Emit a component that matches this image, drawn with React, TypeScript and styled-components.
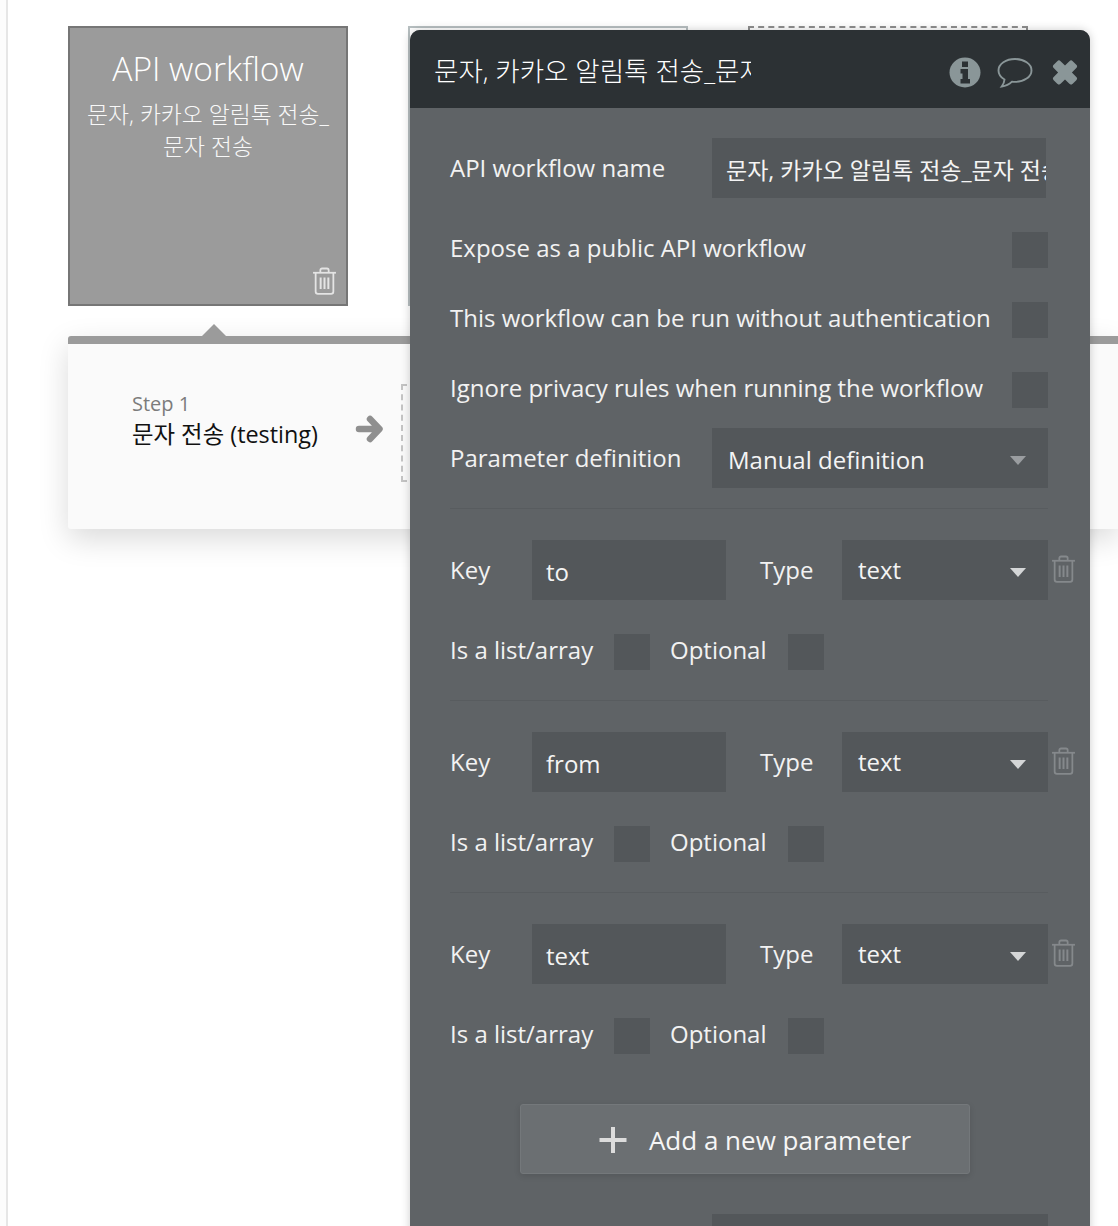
import styled, { createGlobalStyle } from 'styled-components';

const FONT = `"Open Sans", "Noto Sans CJK KR", sans-serif`;

const GlobalStyle = createGlobalStyle`
  html, body {
    margin: 0;
    padding: 0;
    background: #fff;
    font-family: ${FONT};
  }
`;

type Param = { name: string };

const params: Param[] = [{ name: 'to' }, { name: 'from' }, { name: 'text' }];

const TrashIcon = ({ color = '#e4e4e4' }: { color?: string }) => (
  <svg width="25" height="28" viewBox="0 0 24 26.800" fill="none" stroke={color} strokeWidth="1.700">
    <path d="M1 5.500h22" />
    <path d="M8 5.500V3a1.600 1.600 0 0 1 1.600-1.600h4.800A1.600 1.600 0 0 1 16 3v2.500" />
    <path d="M3.500 5.500v18a2.200 2.200 0 0 0 2.200 2.200h12.600a2.200 2.200 0 0 0 2.200-2.200v-18" />
    <path d="M8.300 10v11M12 10v11M15.700 10v11" strokeWidth="1.900" />
  </svg>
);

const InfoIcon = () => (
  <svg width="32" height="31" viewBox="0 0 32 31">
    <ellipse cx="16" cy="15.500" rx="15.500" ry="15" fill="#8a9698" />
    <path d="M13 4.500h6v5.500h-6zM11.500 12h7.500v10h2v4.500H11.500V22h2V16.500h-2z" fill="#2c3134" />
  </svg>
);

const CommentIcon = () => (
  <svg width="36" height="32" viewBox="0 0 36 32" fill="none" stroke="#8a9698" strokeWidth="1.900">
    <path d="M18 2C9 2 1.500 7 1.500 13.500c0 3.800 2.500 7 6 9-.2 2.500-1.200 5-2.800 7 3.800-.4 8-2.500 10.300-4.800 1 .1 2 .2 3 .2 9 0 16.500-5 16.500-11.500S27 2 18 2z" />
  </svg>
);

const CloseIcon = () => (
  <svg width="26" height="25" viewBox="2.500 2.500 21 21">
    <path
      d="M3.500 6.500 6.500 3.500a2 2 0 0 1 2.800 0L13 7.200l3.700-3.700a2 2 0 0 1 2.800 0l3 3a2 2 0 0 1 0 2.800L18.800 13l3.700 3.700a2 2 0 0 1 0 2.800l-3 3a2 2 0 0 1-2.800 0L13 18.800l-3.700 3.700a2 2 0 0 1-2.800 0l-3-3a2 2 0 0 1 0-2.800L7.200 13 3.500 9.300a2 2 0 0 1 0-2.800z"
      fill="#8a9698"
    />
  </svg>
);

const ArrowIcon = () => (
  <svg width="28" height="30" viewBox="0 0 28 30" fill="none" stroke="#8f8f8f" strokeWidth="6.500" strokeLinecap="round" strokeLinejoin="round">
    <path d="M4 15h20M15 5l9.500 10L15 25" />
  </svg>
);

const PlusIcon = () => (
  <svg width="28" height="28" viewBox="0 0 28 28" fill="#dcdcdc">
    <path d="M12 1h4v11h11.500v4H16v11h-4V16H.500v-4H12z" />
  </svg>
);

const Page = styled.div`
  position: relative;
  width: 1118px;
  height: 1226px;
  overflow: hidden;
  background: #fff;
`;

const Rail = styled.div`
  position: absolute;
  left: 0;
  top: 0;
  bottom: 0;
  width: 6px;
  background: #fcfcfc;
  border-right: 2px solid #e6e6e6;
`;

const CardRow = styled.div`
  display: flex;
  gap: 60px;
  padding: 26px 0 0 68px;
`;

const EventCard = styled.div`
  position: relative;
  box-sizing: border-box;
  width: 280px;
  height: 280px;
  padding: 18px 10px 0;
  background: #9b9b9b;
  border: 2px solid #767676;
  color: #fff;
  text-align: center;
`;

const CardTitle = styled.div`
  font-size: 33.500px;
  font-weight: 300;
  line-height: 44px;
`;

const CardSubtitle = styled.div`
  margin-top: 9px;
  font-size: 22.800px;
  font-weight: 300;
  line-height: 32px;
  color: #f8f8f8;
`;

const CardTrash = styled.div`
  position: absolute;
  right: 9px;
  bottom: 9px;
  line-height: 0;
`;

const GhostCard = styled.div<{ $dashed?: boolean }>`
  box-sizing: border-box;
  width: 280px;
  height: 280px;
  border: 2px ${({ $dashed }) => ($dashed ? 'dashed #8f8f8f' : 'solid #b7bfc1')};
`;

const StepBand = styled.div`
  position: relative;
  box-sizing: border-box;
  display: flex;
  align-items: flex-start;
  height: 193px;
  margin: 30px 0 0 68px;
  padding: 47px 0 0 64px;
  background: #fafafa;
  border-top: 8px solid #9b9b9b;
  border-radius: 3px 0 0 3px;
  box-shadow: 0 10px 30px rgba(0, 0, 0, 0.15);

  &::before {
    content: '';
    position: absolute;
    left: 133px;
    top: -20px;
    border-left: 13px solid transparent;
    border-right: 13px solid transparent;
    border-bottom: 13px solid #9b9b9b;
  }
`;

const StepText = styled.div`
  width: 223px;
`;

const StepLabel = styled.div`
  font-size: 20px;
  line-height: 26px;
  color: #7c7c7c;
`;

const StepName = styled.div`
  margin-top: 1px;
  font-size: 23.400px;
  line-height: 32px;
  color: #111;
  white-space: nowrap;
`;

const StepArrow = styled.div`
  margin: 23px 18px 0 0;
  line-height: 0;
`;

const AddStepSlot = styled.div`
  box-sizing: border-box;
  width: 60px;
  height: 98px;
  margin-top: -7px;
  border: 2px dashed #c4c4c4;
`;

const Editor = styled.div`
  position: absolute;
  left: 410px;
  top: 30px;
  width: 680px;
  height: 1220px;
  border-radius: 10px 10px 0 0;
  background: #5f6366;
  box-shadow: 0 0 10px rgba(0, 0, 0, 0.2);
  color: #fff;
`;

const EditorHeader = styled.div`
  box-sizing: border-box;
  display: flex;
  align-items: center;
  height: 78px;
  padding: 0 12px 0 24px;
  background: #2c3134;
  border-radius: 10px 10px 0 0;
`;

const EditorTitle = styled.div`
  width: 317px;
  margin-top: 4px;
  overflow: hidden;
  white-space: nowrap;
  font-size: 26.500px;
  font-weight: 300;
  line-height: 36px;
  color: #fff;
`;

const HeaderIcons = styled.div`
  display: flex;
  align-items: center;
  margin: 7px 0 0 auto;
  gap: 16px;
  line-height: 0;

  svg:last-child {
    margin-left: 3px;
  }
`;

const EditorBody = styled.div`
  padding: 30px 42px 0 40px;
`;

const Row = styled.div<{ $height?: number; $gap?: number }>`
  display: flex;
  align-items: center;
  height: ${({ $height }) => $height ?? 60}px;
  margin-bottom: ${({ $gap }) => $gap ?? 0}px;
`;

const Label = styled.div<{ $width?: number; $offset?: number; $tall?: boolean }>`
  ${({ $width }) => ($width ? `width: ${$width}px;` : '')}
  flex-shrink: 0;
  margin-top: ${({ $tall }) => ($tall ? 0 : -4)}px;
  margin-left: ${({ $offset }) => $offset ?? 0}px;
  font-size: 24px;
  line-height: 32px;
  color: #f2f2f2;
  white-space: nowrap;
`;

const TextInput = styled.div<{ $width: number; $size?: number }>`
  box-sizing: border-box;
  flex-shrink: 0;
  width: ${({ $width }) => $width}px;
  height: 60px;
  padding: 0 0 0 14px;
  overflow: hidden;
  background: #53575a;
  font-size: ${({ $size }) => $size ?? 24}px;
  line-height: 64px;
  white-space: nowrap;
  color: #f4f4f4;
`;

const Dropdown = styled.div<{ $width: number; $muted?: boolean; $lineHeight?: number }>`
  box-sizing: border-box;
  position: relative;
  flex-shrink: 0;
  width: ${({ $width }) => $width}px;
  height: 60px;
  padding-left: 16px;
  background: #53575a;
  font-size: 24px;
  line-height: ${({ $lineHeight }) => $lineHeight ?? 60}px;
  color: #f4f4f4;

  &::after {
    content: '';
    position: absolute;
    right: 22px;
    top: 28px;
    border-left: 8px solid transparent;
    border-right: 8px solid transparent;
    border-top: 9px solid ${({ $muted }) => ($muted ? '#9a9da0' : '#d4d6d7')};
  }
`;

const Check = styled.div<{ $gapRight?: number }>`
  flex-shrink: 0;
  width: 36px;
  height: 36px;
  margin-right: ${({ $gapRight }) => $gapRight ?? 0}px;
  background: #53575a;
`;

const Divider = styled.div<{ $top?: number }>`
  height: 1px;
  background: #585c5f;
  margin: ${({ $top }) => $top ?? 20}px 0 31px;
`;

const ParamTrash = styled.div`
  flex-shrink: 0;
  width: 0;
  margin-top: -2px;
  padding-left: 3px;
  line-height: 0;
`;

const AddButton = styled.div`
  box-sizing: border-box;
  display: flex;
  align-items: center;
  justify-content: center;
  gap: 22px;
  width: 450px;
  height: 70px;
  margin: 50px 0 40px 70px;
  padding: 2px 0 0 20px;
  background: #6b6f72;
  border: 1px solid #74787b;
  border-radius: 3px;
  box-shadow: 0 2px 6px rgba(0, 0, 0, 0.12);
  font-size: 26px;
  color: #f6f6f6;
`;

const App = () => (
  <Page>
    <GlobalStyle />
    <Rail />
    <CardRow>
      <EventCard>
        <CardTitle>API workflow</CardTitle>
        <CardSubtitle>문자, 카카오 알림톡 전송_문자 전송</CardSubtitle>
        <CardTrash>
          <TrashIcon />
        </CardTrash>
      </EventCard>
      <GhostCard />
      <GhostCard $dashed />
    </CardRow>
    <StepBand>
      <StepText>
        <StepLabel>Step 1</StepLabel>
        <StepName>문자 전송 (testing)</StepName>
      </StepText>
      <StepArrow>
        <ArrowIcon />
      </StepArrow>
      <AddStepSlot />
    </StepBand>
    <Editor>
      <EditorHeader>
        <EditorTitle>문자, 카카오 알림톡 전송_문자 전송</EditorTitle>
        <HeaderIcons>
          <InfoIcon />
          <CommentIcon />
          <CloseIcon />
        </HeaderIcons>
      </EditorHeader>
      <EditorBody>
        <Row $gap={34}>
          <Label $width={262} $tall>
            API workflow name
          </Label>
          <TextInput $width={334} $size={23}>
            문자, 카카오 알림톡 전송_문자 전송
          </TextInput>
        </Row>
        <Row $height={36} $gap={34}>
          <Label $width={562}>Expose as a public API workflow</Label>
          <Check />
        </Row>
        <Row $height={36} $gap={34}>
          <Label $width={562}>This workflow can be run without authentication</Label>
          <Check />
        </Row>
        <Row $height={36} $gap={20}>
          <Label $width={562}>Ignore privacy rules when running the workflow</Label>
          <Check />
        </Row>
        <Row>
          <Label $width={262} $tall>
            Parameter definition
          </Label>
          <Dropdown $width={336} $muted $lineHeight={64}>
            Manual definition
          </Dropdown>
        </Row>
        <Divider />
        {params.map((param, i) => (
          <div key={param.name}>
            <Row $gap={34}>
              <Label $width={82} $tall>
                Key
              </Label>
              <TextInput $width={194}>{param.name}</TextInput>
              <Label $width={82} $offset={34} $tall>
                Type
              </Label>
              <Dropdown $width={206}>text</Dropdown>
              <ParamTrash>
                <TrashIcon color="#85898c" />
              </ParamTrash>
            </Row>
            <Row $height={36}>
              <Label $width={164}>Is a list/array</Label>
              <Check $gapRight={20} />
              <Label $width={118}>Optional</Label>
              <Check />
            </Row>
            {i < params.length - 1 ? <Divider $top={30} /> : null}
          </div>
        ))}
        <AddButton>
          <PlusIcon />
          Add a new parameter
        </AddButton>
        <Row>
          <Label $width={262} />
          <TextInput $width={336} />
        </Row>
      </EditorBody>
    </Editor>
  </Page>
);

export default App;
